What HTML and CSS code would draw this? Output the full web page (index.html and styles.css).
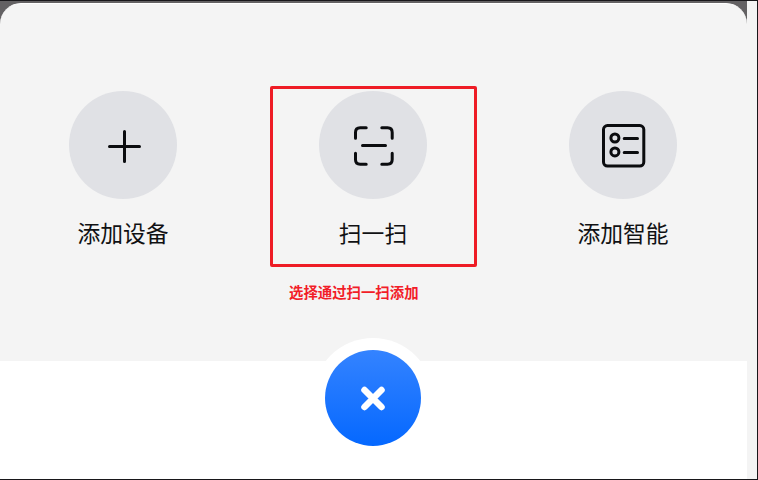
FILE: index.html
```html
<!DOCTYPE html>
<html lang="zh-CN">
<head>
<meta charset="utf-8">
<title>添加设备</title>
<link rel="stylesheet" href="styles.css">
</head>
<body>
<div class="window">
  <div class="screen">
    <main class="sheet">
      <div class="actions">
        <div class="action">
          <div class="disc">
            <svg width="108" height="108" viewBox="0 0 108 108"><path d="M55.5 40.5v30M40.500 55.500h30"/></svg>
          </div>
          <span class="label">添加设备</span>
        </div>
        <div class="action">
          <div class="disc">
            <svg width="108" height="108" viewBox="0 0 108 108"><path d="M36.500 47.200V41.500q0-4.700 4.700-4.700h6M62.800 36.800h5.700q4.700 0 4.700 4.700v5.700M73.200 62.200v6.300q0 4.700-4.700 4.700h-5.700M47.200 73.200h-6q-4.700 0-4.700-4.700v-6.300M43.500 54.500h23"/></svg>
          </div>
          <span class="label">扫一扫</span>
          <div class="highlight"></div>
          <span class="note">选择通过扫一扫添加</span>
        </div>
        <div class="action">
          <div class="disc">
            <svg width="108" height="108" viewBox="0 0 108 108"><rect x="34.500" y="34.600" width="40.300" height="40.500" rx="4"/><circle cx="45.900" cy="47" r="4"/><circle cx="45.900" cy="60.900" r="4"/><path d="M55.200 47.500h13.300M55.200 61.400h13.300"/></svg>
          </div>
          <span class="label">添加智能</span>
        </div>
      </div>
    </main>
    <footer class="bar">
      <div class="close">
        <svg width="96" height="96" viewBox="0 0 96 96"><path d="M39.500 40l17 17M56.500 40l-17 17"/></svg>
      </div>
    </footer>
  </div>
</div>
</body>
</html>
```
FILE: styles.css
```css
* { box-sizing: border-box; }
body {
  margin: 0;
  font-family: "Noto Sans CJK SC", sans-serif;
  background: #f4f4f4;
}
.window {
  height: 480px;
  border: solid #18171a;
  border-width: 1px 1px 1px 0;
  overflow: hidden;
}
.screen {
  width: 747px;
  height: 478px;
  background: #636163;
  padding-top: 2px;
  display: flex;
  flex-direction: column;
}
.sheet {
  height: 358px;
  padding: 87px 0 0 69px;
  background: #f4f4f4;
  border-top: 1px solid #fff;
  border-radius: 21px 21px 0 0;
}
.actions { display: flex; gap: 142px; }
.action {
  position: relative;
  width: 108px;
  display: flex;
  flex-direction: column;
  align-items: center;
}
.disc {
  width: 108px;
  height: 108px;
  border-radius: 50%;
  background: #e0e1e5;
}
svg {
  display: block;
  fill: none;
  stroke: #0b0c0f;
  stroke-width: 3;
  stroke-linecap: round;
  stroke-linejoin: round;
}
.label {
  margin-top: 17px;
  font-size: 22.8px;
  line-height: 34px;
  color: #101113;
  white-space: nowrap;
}
.highlight {
  position: absolute;
  left: -49px;
  top: -5px;
  width: 207px;
  height: 181px;
  border: 3px solid #ee1c25;
  border-radius: 2px;
}
.note {
  position: absolute;
  left: -30px;
  top: 191px;
  font-size: 14.4px;
  font-weight: 700;
  line-height: 20px;
  color: #f21d28;
  white-space: nowrap;
}
.bar {
  flex: 1;
  background: #fff;
  display: flex;
  justify-content: center;
  align-items: flex-start;
  padding-right: 1px;
}
.close {
  margin-top: -11px;
  width: 96px;
  height: 96px;
  border-radius: 50%;
  background: linear-gradient(#3483ff, #0568ff);
  box-shadow: 0 0 0 12px #fff;
}
.close svg { stroke: #fff; stroke-width: 6.5; }
```
